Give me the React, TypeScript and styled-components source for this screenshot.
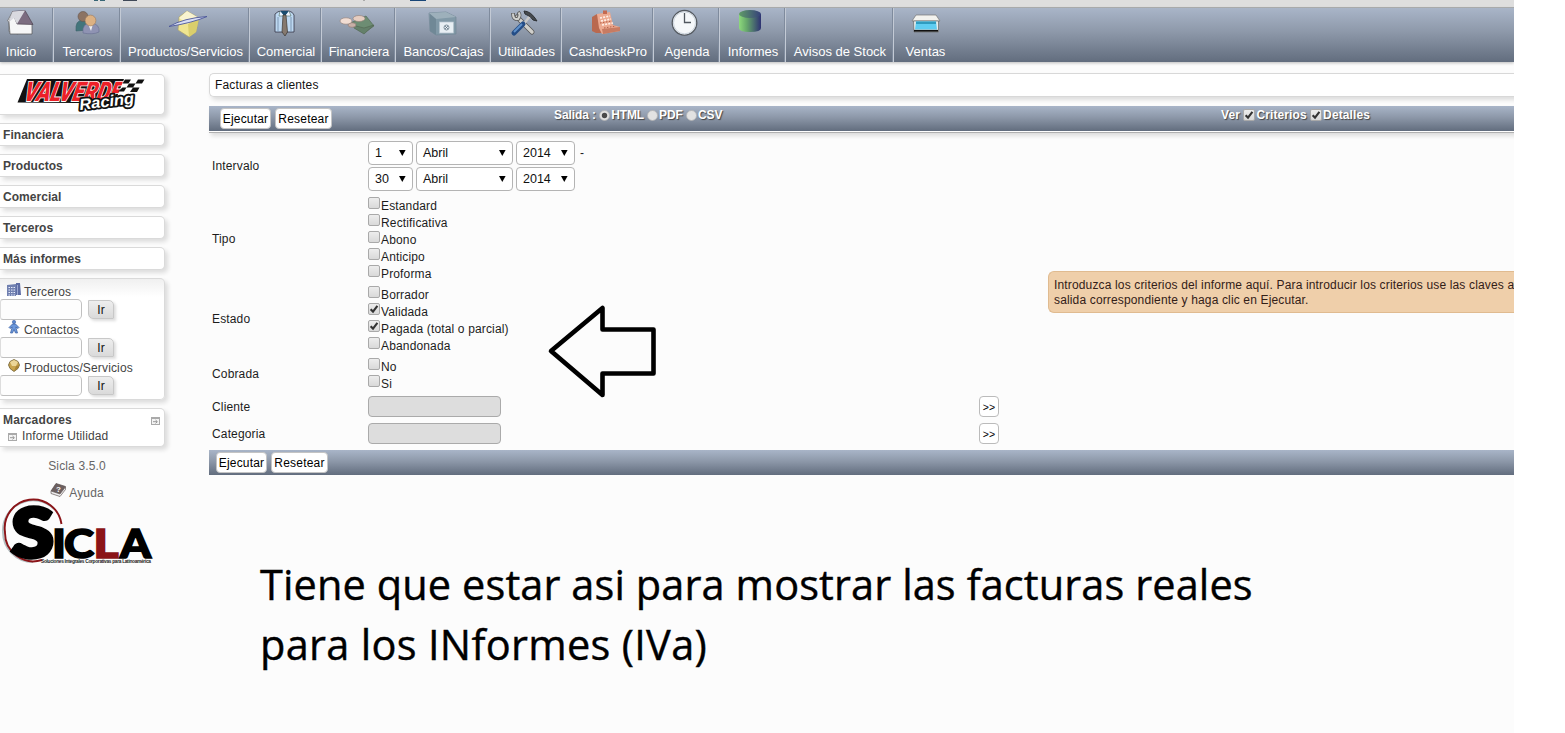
import React from 'react';
import styled, { createGlobalStyle } from 'styled-components';

const Global = createGlobalStyle`
  * { box-sizing: border-box; }
  body { margin: 0; background: #fff; }
`;

const Page = styled.div`
  width: 1514px;
  height: 733px;
  overflow: hidden;
  background: #fcfcfc;
  color: #222;
  font: 12px/15px "Liberation Sans", Arial, sans-serif;
  letter-spacing: 0.15px;
  position: relative;
  display: flex;
  flex-direction: column;
`;

const BrowserStrip = styled.div`
  height: 8px;
  flex: none;
  background: #dedede;
  border-bottom: 1px solid #a4a6a8;
  svg { display: block; }
`;

const barFill = 'linear-gradient(to bottom, #a9b5c8 0%, #8d98a9 45%, #626d7e 100%)';

const Nav = styled.nav`
  height: 54px;
  flex: none;
  display: flex;
  background: ${barFill};
  box-shadow: 0 1px 3px #bbb;
`;

const NavItem = styled.a<{ $w: number; $pr?: number; $last?: boolean }>`
  width: ${p => p.$w}px;
  padding-right: ${p => p.$pr ?? 0}px;
  padding-left: 1px;
  border-right: ${p => (p.$last ? '0' : '1px solid #c3cad5')};
  box-shadow: ${p => (p.$last ? 'none' : 'inset -1px 0 0 #7f8b9d')};
  display: flex;
  flex-direction: column;
  align-items: center;
  color: #fff;
  font-size: 13px;
  letter-spacing: 0;
  line-height: 16px;
  white-space: nowrap;
`;

const NavIcon = styled.svg`
  width: 40px;
  height: 32px;
  margin-bottom: 4px;
  flex: none;
  overflow: visible;
`;

const Body = styled.div`
  display: flex;
  flex: 1;
`;

const Sidebar = styled.aside`
  width: 209px;
  flex: none;
  padding-top: 12px;
  display: flex;
  flex-direction: column;
  align-items: flex-start;
  color: #444;
`;

const Box = styled.div<{ $h: number; $shade?: boolean }>`
  width: 165px;
  height: ${p => p.$h}px;
  margin-bottom: 8px;
  border: 1px solid #dadada;
  border-left: 0;
  border-radius: 0 5px 5px 0;
  background: ${p => (p.$shade ? 'linear-gradient(to bottom, #f0f0f0, #fff 18px)' : '#fff')};
  box-shadow: 3px 3px 4px #ddd;
`;

const MenuBox = styled(Box)`
  padding: 4px 3px 3px;
  font-weight: bold;
  letter-spacing: 0.05px;
`;

const SearchBox = styled(Box)`
  padding-top: 2px;
`;

const SearchLabel = styled.div`
  height: 19px;
  display: flex;
  align-items: flex-end;
  padding-left: 7px;
  line-height: 15px;
  svg { margin: 0 3px 4px 0; flex: none; }
`;

const SearchRow = styled.div`
  display: flex;
  height: 19px;
  gap: 6px;
  align-items: center;
`;

const SearchInput = styled.div`
  width: 82px;
  height: 21px;
  flex: none;
  border: 1px solid #c0c0c0;
  border-left-color: #ddd;
  border-radius: 3px 5px 5px 3px;
  background: #fdfdfd;
`;

const GoButton = styled.button`
  width: 26px;
  height: 19px;
  padding: 0;
  border: 1px solid #c8c8c8;
  border-radius: 0 5px 0 5px;
  background: linear-gradient(to bottom, #eee, #dadada);
  box-shadow: 2px 2px 3px #ddd;
  font: 12px "Liberation Sans", Arial, sans-serif;
  color: #111;
`;

const Bookmarks = styled(Box)`
  padding: 4px 4px 0 3px;
`;

const BookmarkHead = styled.div`
  display: flex;
  justify-content: space-between;
  align-items: center;
  font-weight: bold;
`;

const BookmarkRow = styled.div`
  display: flex;
  align-items: center;
  gap: 5px;
  padding: 1px 0 0 5px;
`;

const Version = styled.div`
  width: 154px;
  margin-top: 4px;
  text-align: center;
  color: #666;
`;

const Help = styled(Version)`
  display: flex;
  justify-content: center;
  gap: 3px;
  height: 17px;
  margin-top: 9px;
  padding-top: 3px;
  svg { margin-top: -3px; flex: none; }
`;

const SiclaMark = styled.svg`
  overflow: visible;
`;

const Main = styled.main`
  flex: 1;
  padding-top: 11px;
  position: relative;
`;

const Title = styled.div`
  height: 24px;
  padding: 4px 5px;
  border: 1px solid #d8d8d8;
  border-right: 0;
  border-radius: 5px 0 0 5px;
  background: #fff;
  box-shadow: 2px 3px 4px #ddd;
  color: #111;
`;

const ActionBar = styled.div<{ $top?: boolean }>`
  display: flex;
  height: ${p => (p.$top ? 27 : 25)}px;
  margin-top: ${p => (p.$top ? 9 : 6)}px;
  padding-left: ${p => (p.$top ? 11 : 7)}px;
  background: ${barFill};
  background-size: 100% 25px;
  background-repeat: no-repeat;
  background-color: #fff;
  ${p => p.$top && 'border-bottom: 1px solid #b0b0b0; box-shadow: 2px 3px 4px #ddd;'}
`;

const Buttons = styled.div<{ $w: number }>`
  width: ${p => p.$w}px;
  display: flex;
  gap: 4px;
  padding-top: 2px;
`;

const Button = styled.button<{ $w: number }>`
  width: ${p => p.$w}px;
  height: 21px;
  padding: 0;
  border: 1px solid #c4c4c4;
  border-radius: 4px;
  background: #fff;
  color: #000;
  font: 12px "Liberation Sans", Arial, sans-serif;
  letter-spacing: 0.2px;
  white-space: nowrap;
`;

const BarOptions = styled.div<{ $w?: number; $s: number }>`
  width: ${p => (p.$w ? p.$w + 'px' : 'auto')};
  display: flex;
  height: 18px;
  align-items: center;
  color: #fff;
  font-weight: bold;
  letter-spacing: ${p => p.$s}px;
  text-shadow: 1px 1px 1px #444;
  white-space: pre;
  svg { margin-right: 1px; }
`;

const Form = styled.div`
  display: flex;
  align-items: center;
  padding: 7px 0 0 3px;
  color: #1c1c1c;
`;

const Fields = styled.div`
  width: 836px;
  flex: none;
  display: flex;
  flex-direction: column;
`;

const Field = styled.div<{ $mb: number }>`
  display: flex;
  align-items: center;
  margin-bottom: ${p => p.$mb}px;
`;

const Label = styled.div`
  width: 156px;
  padding-top: 1px;
`;

const DateRow = styled.div`
  display: flex;
  gap: 3px;
  align-items: center;
  height: 24px;
  margin: 1px 0 2px;
  &:last-child { margin-bottom: 1px; }
`;

const SelectBox = styled.div<{ $w: number }>`
  width: ${p => p.$w}px;
  height: 24px;
  padding: 1px 6px 0;
  border: 1px solid #b4b4b4;
  border-radius: 4px;
  background: #fff;
  display: flex;
  align-items: center;
  justify-content: space-between;
  font-size: 12.5px;
  letter-spacing: 0;
  color: #111;
  svg { margin-top: -1px; }
`;

const Dash = styled.span`
  margin-left: 2px;
`;

const Option = styled.div`
  height: 17px;
  display: flex;
  line-height: 20px;
  letter-spacing: 0.15px;
  svg { margin: 1px 1px 0 0; flex: none; }
`;

const Disabled = styled.div`
  width: 133px;
  height: 21px;
  border: 1px solid #aaa;
  border-radius: 4px;
  background: #ddd;
`;

const More = styled.button`
  width: 20px;
  height: 21px;
  margin-left: 478px;
  padding: 0;
  border: 1px solid #bbb;
  border-radius: 4px;
  background: #fff;
  font: 10.5px "Liberation Sans", Arial, sans-serif;
  color: #000;
`;

const Hint = styled.div`
  flex: 1;
  height: 42px;
  padding: 6px 5px;
  border: 1px solid #e0bb90;
  border-right: 0;
  border-radius: 6px 0 0 6px;
  background: #efcfaa;
  color: #332018;
  letter-spacing: 0.15px;
  white-space: nowrap;
  overflow: hidden;
`;

const Arrow = styled.svg`
  position: absolute;
  left: 336px;
  top: 240px;
`;

const Note = styled.div`
  position: absolute;
  left: 51px;
  top: 493px;
  font: 41.5px/59.5px "Open Sans", "Noto Sans", sans-serif;
  -webkit-text-stroke: 0.4px #000;
  color: #000;
  white-space: nowrap;
`;

const NoteLine = styled.div<{ $s: number }>`
  letter-spacing: ${p => p.$s}px;
`;

const Check = ({ on = false, size = 12 }: { on?: boolean; size?: number }) => (
  <svg width={size} height={size} viewBox="0 0 12 12">
    <defs>
      <linearGradient id="ck" x1="0" y1="0" x2="0" y2="1">
        <stop offset="0" stopColor="#eee" />
        <stop offset="1" stopColor="#d8d8d8" />
      </linearGradient>
    </defs>
    <rect x=".5" y=".5" width="11" height="11" rx="1.5" fill="url(#ck)" stroke="#a9a9a9" />
    {on && <path d="M2.6 6.2 L5 8.6 L9.4 2.8" fill="none" stroke="#333" strokeWidth="2.1" />}
  </svg>
);

const Radio = ({ on = false }: { on?: boolean }) => (
  <svg width="11" height="11" viewBox="0 0 11 11">
    <circle cx="5.5" cy="5.5" r="5" fill="#e2e2e2" stroke="#b4b4b4" strokeWidth=".8" />
    {on && <circle cx="5.5" cy="5.5" r="2.7" fill="#4a4a4a" />}
  </svg>
);

const Select = ({ w, children }: { w: number; children: React.ReactNode }) => (
  <SelectBox $w={w}>
    {children}
    <svg width="7" height="6"><path d="M0 0H6.6L3.3 6Z" fill="#000" /></svg>
  </SelectBox>
);

const Bookmark = () => (
  <svg width="9" height="8" viewBox="0 0 9 8">
    <rect x=".5" y=".5" width="8" height="7" fill="#f4f4f4" stroke="#aaa" />
    <path d="M1 1.5H8" stroke="#aaa" />
    <path d="M2 4.7H6M4.5 3L6.4 4.7L4.5 6.4" stroke="#999" fill="none" />
  </svg>
);

const icons: Record<string, React.ReactNode> = {
  Inicio: (
    <g strokeLinejoin="round">
      <path d="M6.500 13L11.500 3.500L17 15V26L8 23.500V14Z" fill="#e6e6ea" stroke="#666" strokeWidth=".7" />
      <path d="M16 15H31V26H9L8 14L11.500 5Z" fill="#f6f6f7" stroke="#555" strokeWidth=".7" />
      <path d="M11.500 3.500L24 2.500L32 16.500L16 16Z" fill="#7c6c80" stroke="#4f4552" strokeWidth=".7" />
      <path d="M11.500 3.500L24 2.500L16 16L13 10L7.500 14.500Z" fill="#d9d9df" />
    </g>
  ),
  Terceros: (
    <g strokeWidth=".6">
      <path d="M8 23Q7 12 15 12Q21 13 20 22Z" fill="#43757c" stroke="#3b5f66" />
      <circle cx="15" cy="8.5" r="5" fill="#8c7363" stroke="#67574f" />
      <path d="M15 25Q14 15 23 15Q32 16 31 24Q25 27 15 25Z" fill="#8f93b3" stroke="#666d90" />
      <path d="M20 16L23 23L25 16Z" fill="#eee" />
      <circle cx="22.5" cy="12.5" r="5.4" fill="#dcb183" stroke="#9b7a5d" />
    </g>
  ),
  'Productos/Servicios': (
    <g transform="translate(2 0)">
      <path d="M19 3L31 10L28 24L21 29L10 22L11 9Z" fill="#efe590" stroke="#a9a172" strokeWidth=".7" />
      <path d="M19 3L31 10L20 16L11 10Z" fill="#f8f3d0" />
      <path d="M20 16L21 29L28 24L31 10Z" fill="#dace6c" />
      <path d="M1 18.500Q16 10 39 8.500Q24 15 1 18.500Z" fill="#d7ddf5" stroke="#4b5699" strokeWidth=".9" />
    </g>
  ),
  Comercial: (
    <g transform="translate(-1 0)">
      <path d="M10 6Q13 3 16 3H24Q28 4 29 7V24H10Z" fill="#bed9f2" stroke="#334" strokeWidth=".8" />
      <path d="M13 9V24M26 9V24" stroke="#7f98b4" />
      <path d="M15 3H24L20 9Z" fill="#194c70" />
      <path d="M15 3L14 8L19 8M24 3L26 8L20 8" fill="#eef5ff" stroke="#354" strokeWidth=".5" />
      <path d="M18 7H21L22.5 24L20 28L17 24Z" fill="#85796f" stroke="#3b3632" strokeWidth=".7" />
    </g>
  ),
  Financiera: (
    <g strokeWidth=".6" transform="translate(-1 0)">
      <path d="M10 16L28 8L36 18L26 25Z" fill="#6d8d73" stroke="#50644f" />
      <path d="M14 17L26 20L36 17L26 26L16 20" fill="#64806a" stroke="#50644f" />
      <ellipse cx="21" cy="10.500" rx="6" ry="3" fill="#e6cdc0" stroke="#927d76" />
      <ellipse cx="14" cy="17" rx="4" ry="2.300" fill="#c8b0a7" stroke="#8b7670" />
      <ellipse cx="8" cy="13" rx="6" ry="3.200" fill="#f1ddd3" stroke="#927d76" />
    </g>
  ),
  'Bancos/Cajas': (
    <g strokeWidth=".7" transform="translate(-1 0)">
      <path d="M6 5L23 4L33 9V26L13 27L7 23Z" fill="#8199a7" stroke="#728897" />
      <path d="M6 5L23 4L33 9L13 11Z" fill="#9db0bb" />
      <path d="M7 6L13 11V27L7 23Z" fill="#708896" />
      <rect x="16.500" y="14" width="14" height="11" fill="#e8eff4" stroke="#b5c4ce" />
      <circle cx="23.500" cy="19.500" r="2.500" fill="none" stroke="#526777" />
      <path d="M22 18L25 21M25 18L22 21" stroke="#526777" />
    </g>
  ),
  Utilidades: (
    <g fill="none" transform="translate(-3 0)">
      <path d="M13 9L28 24" stroke="#555" strokeWidth="5" strokeLinecap="round" />
      <path d="M13 9L28 24" stroke="#d0d0cc" strokeWidth="3.400" strokeLinecap="round" />
      <path d="M9 5Q9 12 14 11Q17 7 14 4" stroke="#555" strokeWidth="3.800" />
      <path d="M9 5.500Q9 12 14 11Q17 7 14.500 4.500" stroke="#cfd0cd" strokeWidth="2.200" />
      <path d="M26 8L19 17" stroke="#c8c8c8" strokeWidth="2.500" />
      <path d="M19 16L10 25" stroke="#244d86" strokeWidth="5" strokeLinecap="round" />
      <path d="M18 16L10 24" stroke="#5f91cb" strokeWidth="2" />
      <path d="M20 3Q27 3 33 13L29 12Q27 8 21 6Z" fill="#45494d" stroke="#2c2f32" />
    </g>
  ),
  CashdeskPro: (
    <g transform="translate(-2 0)">
      <path d="M6 9L11 6L14 12L16 25L10 25L6 23Z" fill="#b9694f" />
      <path d="M11 6L24 4L27 17L34 19V23L16 26L13 20Z" fill="#ecaa91" />
      <path d="M16 21L34 19V23L17 26Z" fill="#c77b62" />
      <path d="M17 2.500H21V6H17Z" fill="#c4694f" />
      <path d="M14 10L24 8M15 13L25 11M16 17L27 15" stroke="#fff0e8" strokeWidth="1.600" strokeDasharray="2 1.200" />
      <path d="M14 15L26 13M18 20L30 18" stroke="#b45f47" strokeDasharray="1.500 1.500" />
    </g>
  ),
  Agenda: (
    <g>
      <circle cx="17.500" cy="14.800" r="12.300" fill="#f5f8fa" stroke="#555b62" strokeWidth="1.300" />
      <circle cx="17.500" cy="14.800" r="11" fill="none" stroke="#c9d2db" strokeWidth="1" />
      <path d="M17.500 5V14.500H24" fill="none" stroke="#50575f" strokeWidth="1.300" />
    </g>
  ),
  Informes: (
    <g transform="translate(-2 0)">
      <defs>
        <linearGradient id="cyl"><stop offset="0" stopColor="#8dd97c" /><stop offset=".35" stopColor="#66a86b" /><stop offset="1" stopColor="#2e3273" /></linearGradient>
        <linearGradient id="lid"><stop offset="0" stopColor="#5f9b67" /><stop offset="1" stopColor="#35407a" /></linearGradient>
      </defs>
      <path d="M8 6V20Q8 24 19 24Q30 24 30 20V6Z" fill="url(#cyl)" />
      <ellipse cx="19" cy="6" rx="11" ry="4" fill="url(#lid)" />
    </g>
  ),
  Ventas: (
    <g>
      <path d="M10 7H30L34 13H6Z" fill="#f2f2ee" stroke="#777" strokeWidth=".7" />
      <path d="M7.500 13H32.500V24H8Z" fill="#e9eceb" stroke="#666" strokeWidth=".7" />
      <path d="M10 13.500H30L31 21.500H9Z" fill="#5fcdf2" />
      <path d="M10 13.500H30V16H10Z" fill="#2f9cc0" />
      <path d="M8 22.800H32" stroke="#111" strokeWidth="1.800" />
    </g>
  ),
};

const nav: { t: string; w: number; pr?: number; last?: boolean }[] = [
  { t: 'Inicio', w: 54, pr: 12 },
  { t: 'Terceros', w: 67 },
  { t: 'Productos/Servicios', w: 129 },
  { t: 'Comercial', w: 72 },
  { t: 'Financiera', w: 74 },
  { t: 'Bancos/Cajas', w: 95 },
  { t: 'Utilidades', w: 71 },
  { t: 'CashdeskPro', w: 92 },
  { t: 'Agenda', w: 66 },
  { t: 'Informes', w: 66 },
  { t: 'Avisos de Stock', w: 108 },
  { t: 'Ventas', w: 62, last: true },
];

const Valverde = () => (
  <svg width="165" height="40" viewBox="0 0 165 40">
    <path d="M27 4H128L124 12L112 28H76L17.500 27.500Z" fill="#111" />
    <text x="0" y="0" transform="translate(22 25.500) skewX(-20)" textLength="97" lengthAdjust="spacingAndGlyphs" fontFamily="Roboto" fontWeight="900" fontSize="27" letterSpacing="0" fill="#ed2027" stroke="#fff" strokeWidth="1.800" paintOrder="stroke">VALVERDE</text>
    <path d="M124 4H145L134 22H117Z" fill="#fff" />
    <path d="M125 4.500H131L128.500 8.500H122.500ZM138 4.500H144.500L142 8.500H135.500ZM129 8.500H135.500L133 12.500H126.500ZM122.500 12.500H126.500L124 16.500H118ZM133 12.500H139.500L137 17H130Z" fill="#111" />
    <text x="0" y="0" transform="translate(80 35) rotate(-7)" textLength="55" lengthAdjust="spacingAndGlyphs" fontFamily="Liberation Sans" fontWeight="bold" fontStyle="italic" fontSize="15.500" letterSpacing="0" fill="#fff" stroke="#111" strokeWidth="3.600" strokeLinejoin="round" paintOrder="stroke">Racing</text>
  </svg>
);

const Sicla = () => (
  <SiclaMark width="165" height="68" viewBox="0 0 165 68">
    <path d="M54 9A30 30 0 0 0 3 32A30 30 0 0 0 33 62" fill="none" stroke="#b3bfc1" strokeWidth="2" />
    <path d="M61.500 24A28.500 28.500 0 0 0 5 32A28.500 28.500 0 0 0 42 60" fill="none" stroke="#8b1418" strokeWidth="1.900" />
    <text x="11.500" y="56.500" textLength="42" lengthAdjust="spacingAndGlyphs" fontFamily="Lato" fontWeight="900" fontSize="66" letterSpacing="0" fill="#000" stroke="#000" strokeWidth="4.500">S</text>
    <g fontFamily="Lato" fontWeight="900" fontSize="39" letterSpacing="0" strokeWidth="1.600">
      <text x="52" y="57.500" textLength="14" lengthAdjust="spacingAndGlyphs" stroke="#000">I</text>
      <text x="64" y="57.500" textLength="30" lengthAdjust="spacingAndGlyphs" stroke="#000">C</text>
      <text x="93.500" y="57.500" textLength="25" lengthAdjust="spacingAndGlyphs" fill="#8b1418" stroke="#8b1418">L</text>
      <text x="120" y="57.500" textLength="31" lengthAdjust="spacingAndGlyphs" stroke="#000">A</text>
    </g>
    <text x="41" y="62.500" textLength="110" fontFamily="Liberation Sans" fontSize="4.800" fontWeight="bold" letterSpacing="0" fill="#222">Soluciones Integrales Corporativas para Latinoamérica</text>
  </SiclaMark>
);

const Building = () => (
  <svg width="14" height="13" viewBox="0 0 14 13">
    <path d="M0 2L9 1V13H0Z" fill="#7080b0" />
    <path d="M9 0H13L14 12H9Z" fill="#5d6ca4" />
    <path d="M1.500 4.500H8M1.500 7H8M1.500 9.500H8M1.500 12H8" stroke="#e6ebfb" strokeDasharray="1.500 1" />
    <path d="M10.500 2V12" stroke="#9aa7d0" />
  </svg>
);

const Person = () => (
  <svg width="14" height="14" viewBox="-1 0 14 14">
    <circle cx="6" cy="2" r="1.700" fill="#5b86cf" stroke="#345a9d" strokeWidth=".5" />
    <path d="M4.500 4H7.500L11 7.500L10 8.500L7.800 7L9.500 13H7.500L6 9.500L4.500 13H2.500L4.200 7L2 8.500L1 7.500Z" fill="#6c98dc" stroke="#345a9d" strokeWidth=".7" />
  </svg>
);

const Product = () => (
  <svg width="14" height="13" viewBox="-1 0 14 13">
    <path d="M6 .5L10 2.500L11.500 6L10 9.500L6 12.500L2 9.500L.5 6L2 2.500Z" fill="#c9a54f" stroke="#6c5a2e" strokeWidth=".8" />
    <path d="M6 1L10 3L8 7H4L2 3Z" fill="#ecd698" />
    <path d="M8 7L6 12L10 9L11 6Z" fill="#a98436" />
  </svg>
);

const Book = () => (
  <svg width="16" height="15" viewBox="0 0 16 15">
    <path d="M6 .5L15.500 3.500L10 11L1 8Z" fill="#6d6060" stroke="#554a4a" strokeWidth=".7" />
    <path d="M1 8L10 11L15.500 4V6.500L10 13.500L1 10.500Z" fill="#eee" stroke="#665a5a" strokeWidth=".7" />
    <text x="6" y="9" fontFamily="Liberation Sans" fontSize="8" fontWeight="bold" fill="#fff">?</text>
  </svg>
);

const searches = [
  { t: 'Terceros', icon: <Building /> },
  { t: 'Contactos', icon: <Person /> },
  { t: 'Productos/Servicios', icon: <Product /> },
];

const checkGroups = [
  { label: 'Tipo', mb: 4, options: ['Estandard', 'Rectificativa', 'Abono', 'Anticipo', 'Proforma'] },
  { label: 'Estado', mb: 4, options: ['Borrador', 'Validada', 'Pagada (total o parcial)', 'Abandonada'] },
  { label: 'Cobrada', mb: 5, options: ['No', 'Si'] },
];
const checked = ['Validada', 'Pagada (total o parcial)'];

export default function App() {
  return (
    <>
      <Global />
      <Page>
        <BrowserStrip>
          <svg width="500" height="2">
            <path d="M94 0H98V1H94ZM100 0H105V1H100Z" fill="#376575" />
            <path d="M123 0H137V1H123Z" fill="#3f4857" />
            <path d="M363 0H365V1H363Z" fill="#aaa" />
            <path d="M410 0H426V1H410Z" fill="#174577" />
          </svg>
        </BrowserStrip>
        <Nav>
          {nav.map(n => (
            <NavItem key={n.t} $w={n.w} $pr={n.pr} $last={n.last}>
              <NavIcon viewBox="0 0 40 32">{icons[n.t]}</NavIcon>
              {n.t}
            </NavItem>
          ))}
        </Nav>
        <Body>
          <Sidebar>
            <Box $h={41}><Valverde /></Box>
            {['Financiera', 'Productos', 'Comercial', 'Terceros', 'Más informes'].map(m => (
              <MenuBox key={m} $h={23}>{m}</MenuBox>
            ))}
            <SearchBox $h={122} $shade>
              {searches.map(s => (
                <React.Fragment key={s.t}>
                  <SearchLabel>{s.icon}{s.t}</SearchLabel>
                  <SearchRow><SearchInput /><GoButton>Ir</GoButton></SearchRow>
                </React.Fragment>
              ))}
            </SearchBox>
            <Bookmarks $h={39}>
              <BookmarkHead>Marcadores<Bookmark /></BookmarkHead>
              <BookmarkRow><Bookmark />Informe Utilidad</BookmarkRow>
            </Bookmarks>
            <Version>Sicla 3.5.0</Version>
            <Help><Book />Ayuda</Help>
            <Sicla />
          </Sidebar>
          <Main>
            <Title>Facturas a clientes</Title>
            <ActionBar $top>
              <Buttons $w={334}>
                <Button $w={51}>Ejecutar</Button>
                <Button $w={57}>Resetear</Button>
              </Buttons>
              <BarOptions $w={667} $s={-0.1}>
                {'Salida : '}<Radio on />{'HTML '}<Radio />{'PDF '}<Radio />CSV
              </BarOptions>
              <BarOptions $s={0.1}>
                {'Ver '}<Check on size={12} />{'Criterios '}<Check on size={12} />Detalles
              </BarOptions>
            </ActionBar>
            <Form>
              <Fields>
                <Field $mb={4}>
                  <Label>Intervalo</Label>
                  <div>
                    <DateRow>
                      <Select w={45}>1</Select><Select w={97}>Abril</Select><Select w={59}>2014</Select><Dash>-</Dash>
                    </DateRow>
                    <DateRow>
                      <Select w={45}>30</Select><Select w={97}>Abril</Select><Select w={59}>2014</Select>
                    </DateRow>
                  </div>
                </Field>
                {checkGroups.map(g => (
                  <Field key={g.label} $mb={g.mb}>
                    <Label>{g.label}</Label>
                    <div>
                      {g.options.map(o => (
                        <Option key={o}><Check on={checked.includes(o)} />{o}</Option>
                      ))}
                    </div>
                  </Field>
                ))}
                <Field $mb={6}><Label>Cliente</Label><Disabled /><More>&gt;&gt;</More></Field>
                <Field $mb={0}><Label>Categoria</Label><Disabled /><More>&gt;&gt;</More></Field>
              </Fields>
              <Hint>
                Introduzca los criterios del informe aquí. Para introducir los criterios use las claves a<br />
                salida correspondiente y haga clic en Ejecutar.
              </Hint>
            </Form>
            <ActionBar>
              <Buttons $w={334}>
                <Button $w={51}>Ejecutar</Button>
                <Button $w={57}>Resetear</Button>
              </Buttons>
            </ActionBar>
            <Arrow width="116" height="100" viewBox="545 302 116 100">
              <path d="M551 351L602.500 308V329.500H653.500V373.500H602.500V395Z" fill="#fcfcfc" stroke="#000" strokeWidth="4.600" strokeLinejoin="round" />
            </Arrow>
            <Note>
              <NoteLine $s={0.1}>Tiene que estar asi para mostrar las facturas reales</NoteLine>
              <NoteLine $s={0.3}>para los INformes (IVa)</NoteLine>
            </Note>
          </Main>
        </Body>
      </Page>
    </>
  );
}
